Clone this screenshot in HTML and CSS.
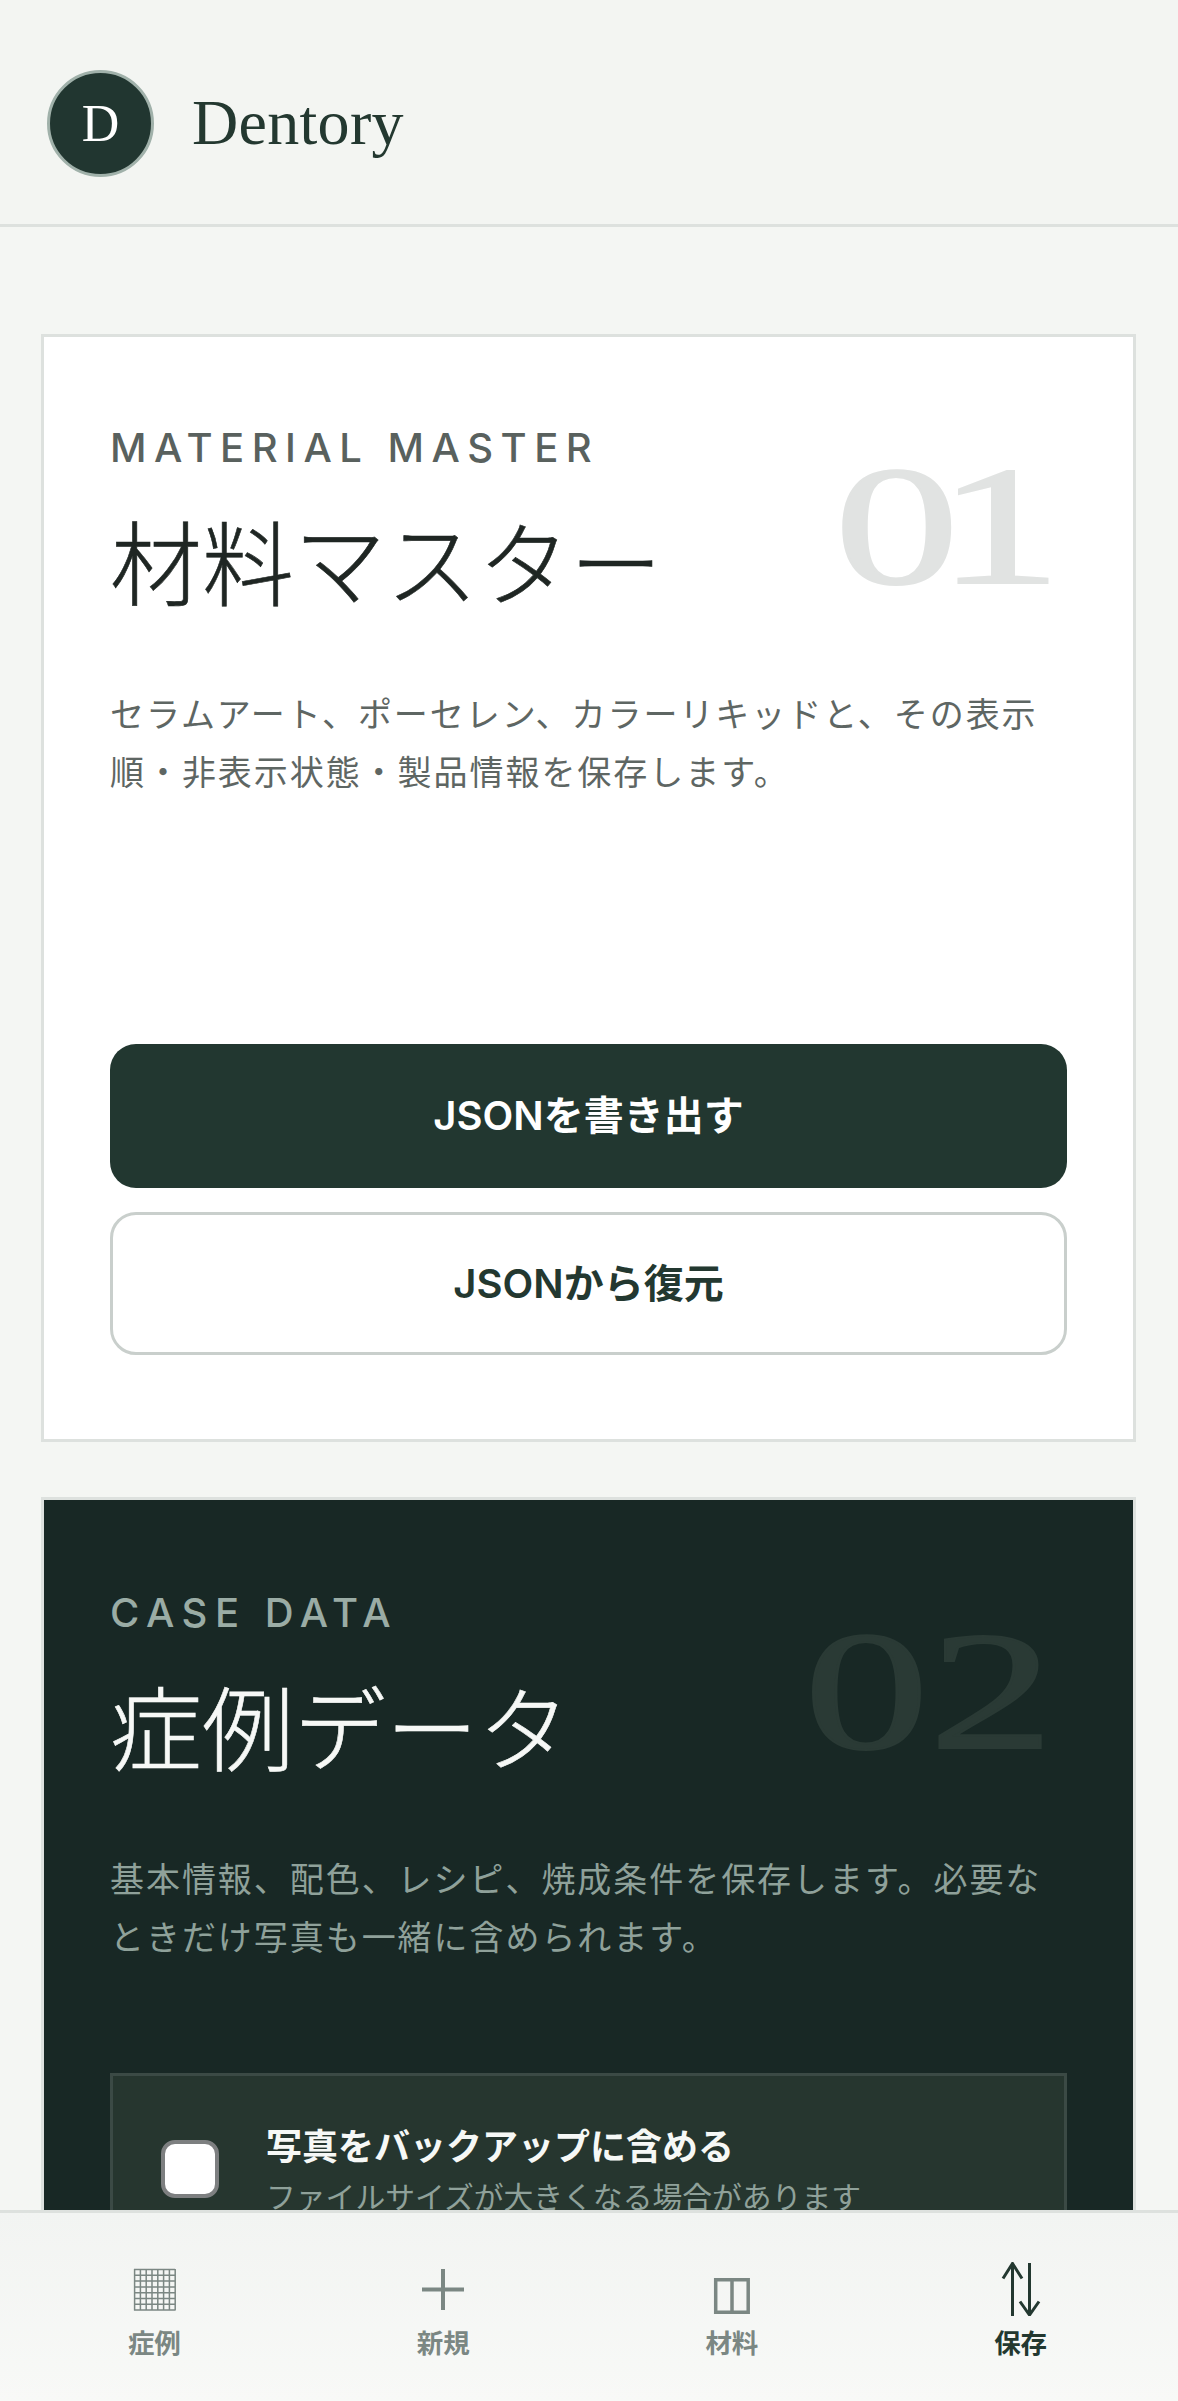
FILE: index.html
```html
<!DOCTYPE html>
<html lang="ja">
<head>
    <meta charset="UTF-8">
    <meta name="viewport" content="width=device-width, initial-scale=1.0">
    <title>Dentory</title>
    <link rel="stylesheet" href="styles.css">
</head>
<body>

<header class="top-bar">
    <div class="avatar">D</div>
    <div class="brand">Dentory</div>
</header>

<main class="content">
    <!-- 材料マスター -->
    <section class="card">
        <div class="card-number card-number-tight">01</div>
        <div class="eyebrow">MATERIAL MASTER</div>
        <h2 class="card-title">材料マスター</h2>
        <p class="card-text">セラムアート、ポーセレン、カラーリキッドと、その表示順・非表示状態・製品情報を保存します。</p>
        <div class="actions">
            <button class="btn btn-solid">JSONを書き出す</button>
            <button class="btn btn-outline">JSONから復元</button>
        </div>
    </section>

    <!-- 症例データ -->
    <section class="card card-dark">
        <div class="card-number">02</div>
        <div class="eyebrow">CASE DATA</div>
        <h2 class="card-title">症例データ</h2>
        <p class="card-text">基本情報、配色、レシピ、焼成条件を保存します。必要なときだけ写真も一緒に含められます。</p>
        <label class="photo-option">
            <span class="checkbox"></span>
            <span class="photo-text">
                <strong>写真をバックアップに含める</strong>
                <small>ファイルサイズが大きくなる場合があります</small>
            </span>
        </label>
    </section>
</main>

<nav class="bottom-nav">
    <a class="nav-item">
        <svg class="nav-icon" viewBox="0 0 60 54">
            <path class="grid-lines" d="M10 7.5H51M10 13.3H51M10 19.1H51M10 24.9H51M10 30.7H51M10 36.5H51M10 42.3H51M10 48.1H51M10.6 7V48.6M16.4 7V48.6M22.2 7V48.6M28 7V48.6M33.8 7V48.6M39.6 7V48.6M45.4 7V48.6M51.2 7V48.6"/>
        </svg>
        <span>症例</span>
    </a>
    <a class="nav-item">
        <svg class="nav-icon" viewBox="0 0 60 54">
            <path class="plus-lines" d="M9 27.5H51M30 7V48"/>
        </svg>
        <span>新規</span>
    </a>
    <a class="nav-item">
        <svg class="nav-icon" viewBox="0 0 60 54">
            <path class="panel-lines" d="M13.7 17.7H46.2V50.3H13.7ZM30 17.7V50.3"/>
        </svg>
        <span>材料</span>
    </a>
    <a class="nav-item active">
        <svg class="nav-icon" viewBox="0 0 60 54">
            <path class="arrow-lines" d="M21.5 54V1.5M12 16.5L21.5 1.5L31 16.5M38.5 1V53M29 39.5L38.5 53L48 39.5"/>
        </svg>
        <span>保存</span>
    </a>
</nav>

</body>
</html>
```

FILE: styles.css
```css
* {
    box-sizing: border-box;
}
html, body {
    height: 100%;
}
body {
    margin: 0;
    background-color: #f4f6f3;
    color: #1f2623;
    font-family: "Liberation Sans", "Noto Sans CJK JP", sans-serif;
    overflow: hidden;
}

/* ヘッダー */
.top-bar {
    display: flex;
    align-items: center;
    gap: 38px;
    height: 227px;
    padding: 22px 47px 0;
    border-bottom: 3px solid #dde1de;
    background-color: #f3f5f2;
}
.avatar {
    display: flex;
    align-items: center;
    justify-content: center;
    width: 107px;
    height: 107px;
    border: 3px solid #a0b1aa;
    border-radius: 50%;
    background-color: #213630;
    color: #fff;
    font-family: "Liberation Serif", serif;
    font-size: 52px;
}
.brand {
    color: #233830;
    font-family: "Liberation Serif", serif;
    font-size: 64px;
    letter-spacing: 0.3px;
}

/* カード */
.content {
    display: flex;
    flex-direction: column;
    gap: 55px;
    padding: 107px 42px 0 41px;
}
.card {
    position: relative;
    padding: 83px 66px 84px;
    border: 3px solid #dde1de;
    background-color: #fff;
}
.card-dark {
    padding-top: 85px;
    background-color: #182825;
}
.card-number {
    position: absolute;
    top: 89px;
    right: 79px;
    color: #e1e3e2;
    font-family: "Liberation Serif", serif;
    font-size: 170px;
    line-height: 200px;
    -webkit-text-stroke: 2px #e1e3e2;
    transform: scaleX(1.47);
    transform-origin: right center;
}
.card-number-tight {
    right: 93px;
    letter-spacing: -15px;
}
.card-dark .card-number {
    top: 91px;
    color: #2a3a35;
    -webkit-text-stroke-color: #2a3a35;
}
.eyebrow {
    height: 56px;
    color: #59615e;
    font-family: Inter, "Liberation Sans", sans-serif;
    font-size: 40px;
    font-weight: 500;
    line-height: 56px;
    letter-spacing: 7.5px;
}
.card-dark .eyebrow {
    color: #9aaca5;
}
.card-title {
    margin: 18px 0 0;
    font-family: "Noto Sans CJK JP", sans-serif;
    font-size: 92px;
    font-weight: 300;
    line-height: 130px;
    -webkit-text-stroke: 0.6px currentColor;
}
.card-dark .card-title {
    color: #f6f8f6;
}
.card-text {
    margin: 60px 0 0;
    color: #5e6663;
    font-family: "Noto Sans CJK JP", sans-serif;
    font-size: 34px;
    line-height: 58px;
    letter-spacing: 1.95px;
}
.card-dark .card-text {
    color: #8fa19a;
}

/* ボタン */
.actions {
    display: flex;
    flex-direction: column;
    gap: 24px;
    margin-top: 244px;
}
.btn {
    height: 143.5px;
    padding-bottom: 6px;
    border-radius: 26px;
    font-family: Inter, "Noto Sans CJK JP", sans-serif;
    font-size: 40px;
    font-weight: 600;
}
.btn-solid {
    border: none;
    background-color: #223730;
    color: #fff;
}
.btn-outline {
    border: 3px solid #c9cfcc;
    background-color: #fff;
    color: #233830;
}

/* 写真オプション */
.photo-option {
    display: flex;
    align-items: center;
    gap: 47px;
    height: 191px;
    margin-top: 108px;
    padding: 0 48px;
    border: 3px solid #3b4a45;
    background-color: #26362f;
}
.checkbox {
    flex: none;
    width: 58px;
    height: 58px;
    border: 4px solid #7d7f80;
    border-radius: 14px;
    background-color: #fff;
}
.photo-text {
    display: flex;
    flex-direction: column;
    gap: 2px;
    margin-top: -4px;
    font-family: "Noto Sans CJK JP", sans-serif;
}
.photo-text strong {
    color: #f6f8f6;
    font-size: 36px;
    line-height: 54px;
}
.photo-text small {
    color: #8fa19a;
    font-size: 29.8px;
    line-height: 44px;
}

/* ボトムナビ */
.bottom-nav {
    position: fixed;
    left: 0;
    right: 0;
    bottom: 0;
    display: grid;
    grid-template-columns: repeat(4, 1fr);
    height: 191px;
    padding: 49px 13px 0 10px;
    border-top: 3px solid #dde1de;
    background: linear-gradient(#f2f4f2, #f8f9f7);
}
.nav-item {
    display: flex;
    flex-direction: column;
    align-items: center;
    color: #7b8783;
    font-family: "Noto Sans CJK JP", sans-serif;
    font-size: 26.5px;
    font-weight: 700;
    line-height: 40px;
}
.nav-item.active {
    color: #233830;
}
.nav-icon {
    width: 60px;
    height: 54px;
    margin-bottom: 6px;
    fill: none;
    stroke: #7b8783;
}
.grid-lines {
    stroke-width: 1.5;
}
.plus-lines {
    stroke-width: 4;
}
.panel-lines {
    stroke-width: 3.5;
}
.arrow-lines {
    stroke: #233830;
    stroke-width: 3;
}
```
